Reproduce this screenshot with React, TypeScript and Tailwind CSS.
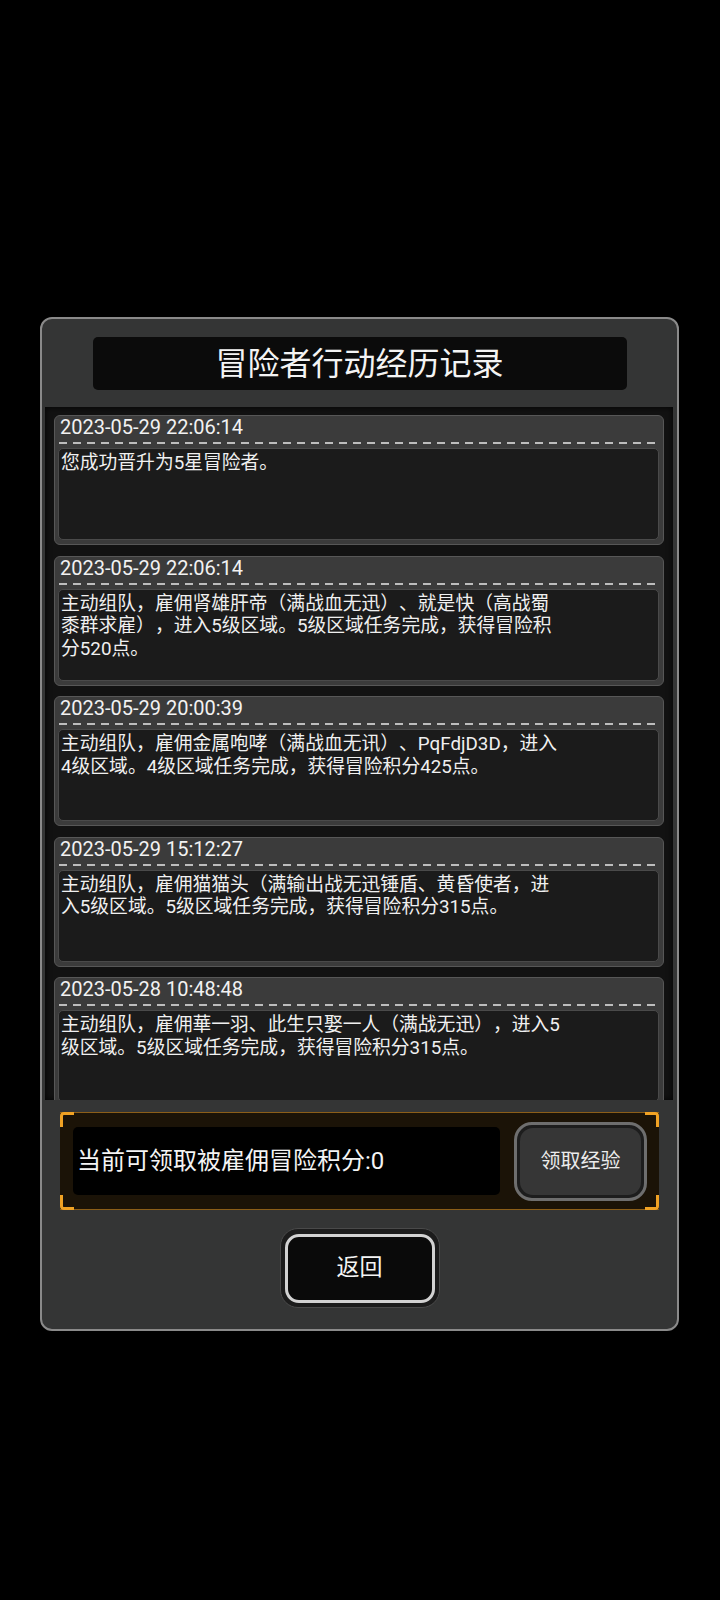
import React from "react";

const font = { fontFamily: 'Roboto, "Noto Sans CJK SC", sans-serif' };

type Entry = { date: string; lines: string[] };

const entries: Entry[] = [
  { date: "2023-05-29 22:06:14", lines: ["您成功晋升为5星冒险者。"] },
  {
    date: "2023-05-29 22:06:14",
    lines: [
      "主动组队，雇佣肾雄肝帝（满战血无迅）、就是快（高战蜀",
      "黍群求雇），进入5级区域。5级区域任务完成，获得冒险积",
      "分520点。",
    ],
  },
  {
    date: "2023-05-29 20:00:39",
    lines: [
      "主动组队，雇佣金属咆哮（满战血无讯）、PqFdjD3D，进入",
      "4级区域。4级区域任务完成，获得冒险积分425点。",
    ],
  },
  {
    date: "2023-05-29 15:12:27",
    lines: [
      "主动组队，雇佣猫猫头（满输出战无迅锤盾、黄昏使者，进",
      "入5级区域。5级区域任务完成，获得冒险积分315点。",
    ],
  },
  {
    date: "2023-05-28 10:48:48",
    lines: [
      "主动组队，雇佣華一羽、此生只娶一人（满战无迅），进入5",
      "级区域。5级区域任务完成，获得冒险积分315点。",
    ],
  },
];

function Card({ e }: { e: Entry }) {
  return (
    <div className="flex h-[130px] shrink-0 flex-col rounded-[6px] border border-[#575757] bg-[#3b3b3b]">
      <div className="h-[22px] pl-[5px] text-[20px] leading-[22px] text-[#f2f2f2]">{e.date}</div>
      <div className="ml-[4px] mr-[2px] mt-[4px] h-[2px] bg-[repeating-linear-gradient(90deg,#bdbdbd_0px,#bdbdbd_8px,transparent_8px,transparent_14px)]" />
      <div className="mb-[4px] ml-[3px] mr-[4px] mt-[4px] flex-1 rounded-[5px] border border-[#4a4a4a] bg-[#1b1b1b] pl-[2px] pt-[3px] text-[18.8px] leading-[22.5px] text-[#f0f0f0]">
        {e.lines.map((l, i) => (
          <div key={i} className="whitespace-nowrap">
            {l}
          </div>
        ))}
      </div>
    </div>
  );
}

export default function App() {
  return (
    <div
      className="h-[1600px] w-[720px] overflow-hidden bg-black pt-[317px] [text-spacing-trim:space-all]"
      style={font}
    >
      <div className="ml-[40px] flex h-[1014px] w-[639px] flex-col rounded-[12px] border-2 border-[#8a8a8a] bg-[#343535]">
        {/* title */}
        <div className="mx-auto mt-[18px] flex h-[53px] w-[534px] items-center justify-center rounded-[5px] bg-[#0b0b0b] text-[32px] text-[#f4f4f4]">
          冒险者行动经历记录
        </div>

        {/* list */}
        <div className="ml-[3px] mr-[4px] mt-[17px] flex h-[693px] flex-col gap-[10.5px] overflow-hidden bg-[#121212] px-[9px] pt-[8px] shadow-[inset_0_0_6px_rgba(0,0,0,0.9)]">
          {entries.map((e, i) => (
            <Card key={i} e={e} />
          ))}
        </div>

        {/* reward frame */}
        <div className="relative mx-[18px] mt-[12px] flex h-[98px] items-center border-y border-[#8c5e18] bg-[#1b1307] pl-[13px] pr-[12px]">
          <div className="absolute left-0 top-[-1px] h-[15px] w-[14px] rounded-tl-[4px] border-l-[3px] border-t-[3px] border-[#f0a224]" />
          <div className="absolute bottom-[-1px] left-0 h-[15px] w-[14px] rounded-bl-[4px] border-b-[3px] border-l-[3px] border-[#f0a224]" />
          <div className="absolute right-0 top-[-1px] h-[15px] w-[14px] rounded-tr-[4px] border-r-[3px] border-t-[3px] border-[#f0a224]" />
          <div className="absolute bottom-[-1px] right-0 h-[15px] w-[14px] rounded-br-[4px] border-b-[3px] border-r-[3px] border-[#f0a224]" />
          <div className="flex h-[68px] w-[427px] items-center rounded-[5px] bg-black pl-[4px] text-[24px] text-[#f4f4f4]">
            当前可领取被雇佣冒险积分:0
          </div>
          <div className="ml-[14px] flex h-[79px] w-[133px] items-center justify-center rounded-[18px] border-[3px] border-[#6e6e6e] bg-[#1d1d1d] p-[3px]">
            <div className="flex h-full w-full items-center justify-center rounded-[13px] bg-[#363636] text-[20px] text-[#ececec]">
              领取经验
            </div>
          </div>
        </div>

        {/* back button */}
        <div className="mx-auto mt-[18px] flex h-[80px] w-[160px] items-center justify-center rounded-[18px] border border-[#4a4a4a] bg-[#1c1c1c]">
          <div className="flex h-[69px] w-[150px] items-center justify-center rounded-[14px] border-[3px] border-[#d2d2d2] bg-[#0a0a0a] text-[23px] text-[#f4f4f4]">
            返回
          </div>
        </div>
      </div>
    </div>
  );
}
